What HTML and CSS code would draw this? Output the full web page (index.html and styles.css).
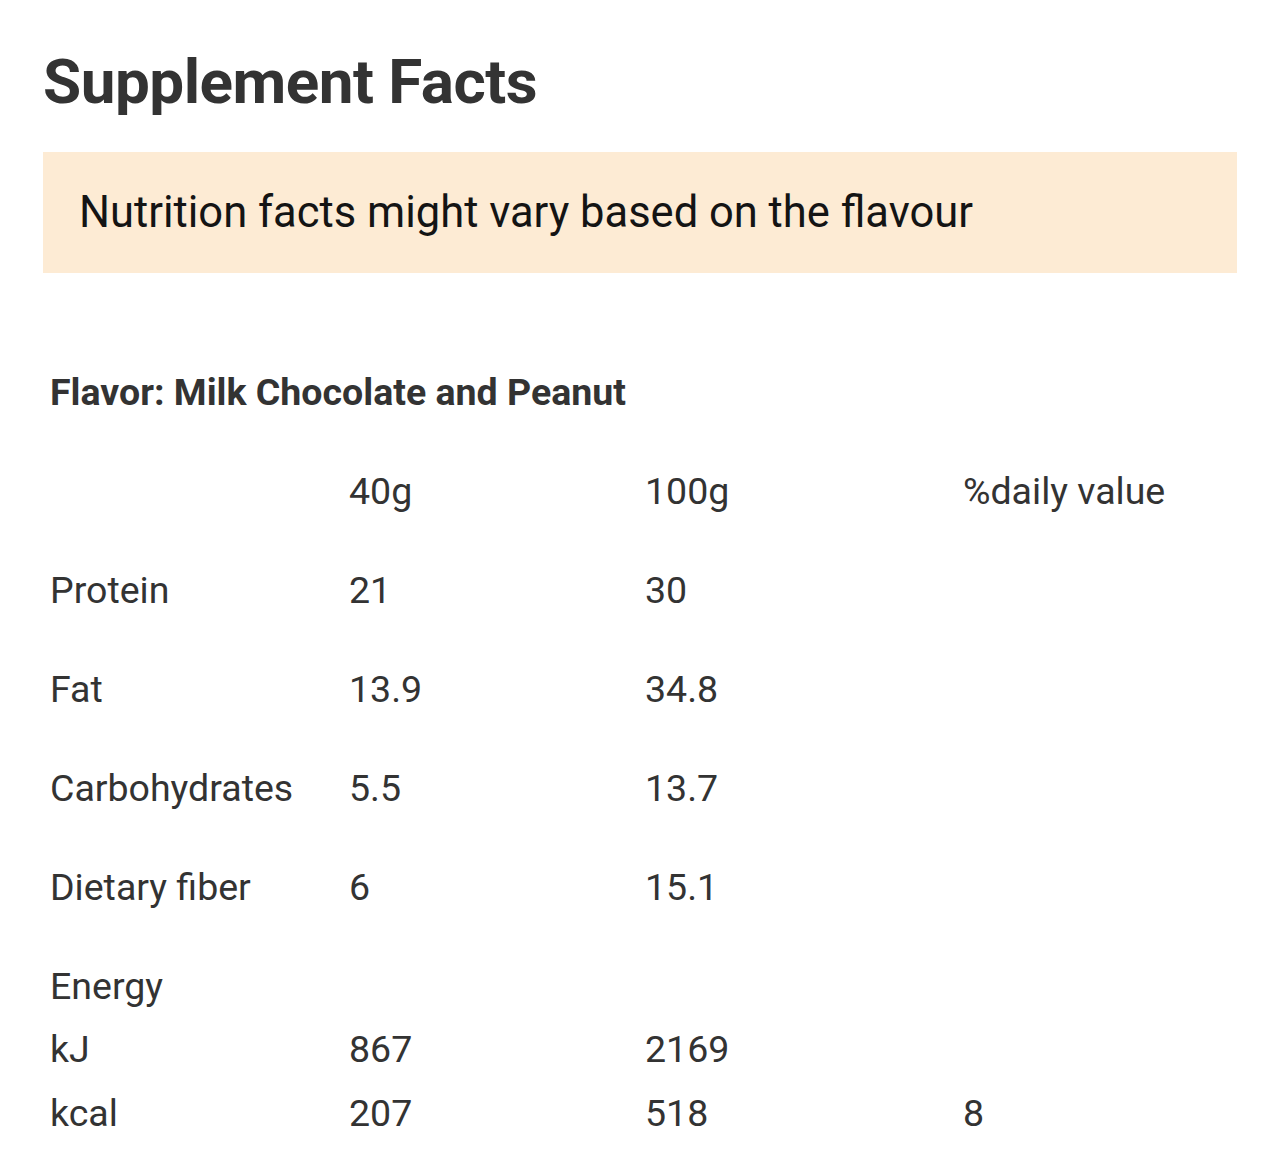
FILE: index.html
```html
<!DOCTYPE html>
<html lang="en">
<head>
<meta charset="utf-8">
<title>Supplement Facts</title>
<link rel="stylesheet" href="styles.css">
</head>
<body>
<main class="page">
  <h1 class="title">Supplement Facts</h1>
  <div class="notice">Nutrition facts might vary based on the flavour</div>
  <section class="facts">
    <h2 class="flavor">Flavor: Milk Chocolate and Peanut</h2>
    <div class="grid">
      <div class="row">
        <span></span><span>40g</span><span>100g</span><span>%daily value</span>
      </div>
      <div class="row">
        <span>Protein</span><span>21</span><span>30</span><span></span>
      </div>
      <div class="row">
        <span>Fat</span><span>13.9</span><span>34.8</span><span></span>
      </div>
      <div class="row">
        <span>Carbohydrates</span><span>5.5</span><span>13.7</span><span></span>
      </div>
      <div class="row">
        <span>Dietary fiber</span><span>6</span><span>15.1</span><span></span>
      </div>
      <div class="row compact energy">
        <span>Energy</span><span></span><span></span><span></span>
      </div>
      <div class="row compact">
        <span>kJ</span><span>867</span><span>2169</span><span></span>
      </div>
      <div class="row compact">
        <span>kcal</span><span>207</span><span>518</span><span>8</span>
      </div>
    </div>
  </section>
</main>
</body>
</html>
```

FILE: styles.css
```css
html, body {
  margin: 0;
  padding: 0;
  background: #ffffff;
}

body {
  font-family: Roboto, "Liberation Sans", sans-serif;
  color: #333333;
}

.page {
  padding: 51px 43px 0 43px;
  display: flex;
  flex-direction: column;
}

.title {
  margin: 0;
  font-size: 62px;
  line-height: 62px;
  font-weight: 700;
  color: #333333;
  letter-spacing: -0.5px;
}

.notice {
  margin-top: 39px;
  height: 121px;
  display: flex;
  align-items: center;
  padding-left: 36px;
  background: #fdebd4;
  color: #141414;
  font-size: 43.5px;
}

.facts {
  margin-top: 69px;
  padding-left: 7px;
}

.flavor {
  margin: 0;
  height: 99px;
  display: flex;
  align-items: center;
  font-size: 37.5px;
  font-weight: 700;
  color: #333333;
}

.grid {
  display: flex;
  flex-direction: column;
}

.row {
  display: grid;
  grid-template-columns: 299px 296px 318px 1fr;
  height: 99px;
  align-items: center;
  font-size: 37.5px;
  color: #333333;
}

.row.compact {
  height: 63.5px;
}

.row.energy {
  margin-top: 18px;
}
```
